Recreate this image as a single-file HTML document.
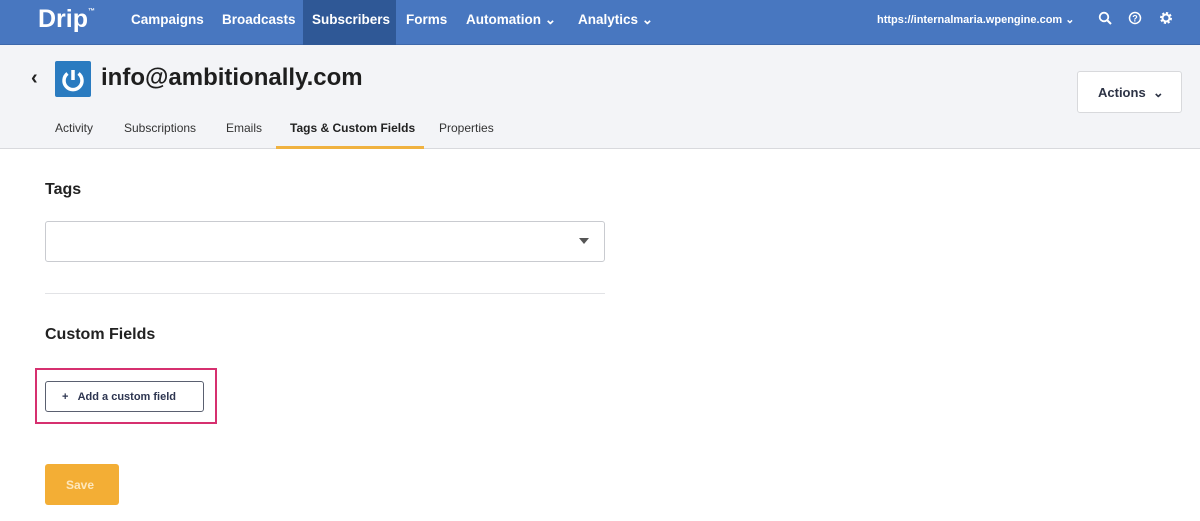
<!DOCTYPE html>
<html><head><style>
*{margin:0;padding:0;box-sizing:border-box}
body{width:1200px;height:521px;background:#fff;font-family:"Liberation Sans",sans-serif;position:relative;overflow:hidden}
.nav{position:absolute;left:0;top:0;width:1200px;height:45px;background:#4877c0;border-bottom:1px solid #3d68ab}
.nav span{position:absolute;top:12px;color:#fff;font-weight:bold;font-size:13.5px}
.sub{position:absolute;left:303px;top:0;width:93px;height:45px;background:#2f5896}
.hdr{position:absolute;left:0;top:45px;width:1200px;height:104px;background:#f3f4f7;border-bottom:1px solid #d8d9dd}
.t{position:absolute;font-size:12px;color:#333;top:121px}
</style></head><body>
<div class="nav">
<span style="left:38px;top:5px;font-size:25px;letter-spacing:0px">Drip<sup style="font-size:7px;vertical-align:top;position:relative;top:3px">™</sup></span>
<span style="left:131px">Campaigns</span>
<span style="left:222px">Broadcasts</span>
<div class="sub"></div>
<span style="left:312px">Subscribers</span>
<span style="left:406px">Forms</span>
<span style="left:466px">Automation ⌄</span>
<span style="left:578px">Analytics ⌄</span>
<span style="left:877px;font-size:11px;top:13px">https://internalmaria.wpengine.com ⌄</span>
<svg style="position:absolute;left:1098px;top:11px" width="14" height="14" viewBox="0 0 14 14"><circle cx="6" cy="6" r="4.3" fill="none" stroke="#fff" stroke-width="1.8"/><path d="M9 9l4 4" stroke="#fff" stroke-width="2"/></svg>
<svg style="position:absolute;left:1128px;top:11px" width="14" height="14" viewBox="0 0 14 14"><circle cx="7" cy="7" r="5.5" fill="none" stroke="#fff" stroke-width="1.5"/><text x="7" y="10.5" font-size="9" fill="#fff" text-anchor="middle" font-weight="bold" font-family="Liberation Sans">?</text></svg>
<svg style="position:absolute;left:1159px;top:11px" width="14" height="14" viewBox="0 0 14 14"><circle cx="7" cy="7" r="4.5" fill="none" stroke="#fff" stroke-width="3" stroke-dasharray="2 1.5"/><circle cx="7" cy="7" r="3.5" fill="none" stroke="#fff" stroke-width="2"/></svg>
</div>
<div class="hdr"></div>
<div style="position:absolute;left:31px;top:67px;font-size:20px;font-weight:bold;color:#222">‹</div>
<div style="position:absolute;left:55px;top:61px;width:36px;height:36px;background:#2a7bc0;border-radius:2px"></div>
<svg style="position:absolute;left:55px;top:61px" width="36" height="36" viewBox="0 0 36 36"><path d="M12.5 12.5a9 9 0 1 0 11 0" fill="none" stroke="#fff" stroke-width="3.5"/><path d="M18 9v10" stroke="#fff" stroke-width="3.5"/></svg>
<div style="position:absolute;left:101px;top:64px;font-size:24px;font-weight:bold;color:#1e1e1e">info@ambitionally.com</div>
<div style="position:absolute;left:1077px;top:71px;width:105px;height:42px;background:#fff;border:1px solid #d8d9dc;border-radius:3px;font-size:13px;font-weight:bold;color:#2d3345;padding:13px 0 0 20px">Actions &nbsp;⌄</div>
<div class="t" style="left:55px">Activity</div>
<div class="t" style="left:124px">Subscriptions</div>
<div class="t" style="left:226px">Emails</div>
<div class="t" style="left:290px;font-weight:bold;color:#222">Tags &amp; Custom Fields</div>
<div class="t" style="left:439px">Properties</div>
<div style="position:absolute;left:276px;top:146px;width:148px;height:3px;background:#f0b240"></div>
<div style="position:absolute;left:45px;top:181px;font-size:16px;font-weight:bold;color:#222">Tags</div>
<div style="position:absolute;left:45px;top:221px;width:560px;height:41px;border:1px solid #c9cbd0;border-radius:3px"></div>
<div style="position:absolute;left:579px;top:238px;border-left:5px solid transparent;border-right:5px solid transparent;border-top:6px solid #555"></div>
<div style="position:absolute;left:45px;top:293px;width:560px;height:1px;background:#e2e3e6"></div>
<div style="position:absolute;left:45px;top:326px;font-size:16px;font-weight:bold;color:#222">Custom Fields</div>
<div style="position:absolute;left:35px;top:368px;width:182px;height:56px;border:2px solid #d6306f"></div>
<div style="position:absolute;left:45px;top:381px;width:159px;height:31px;border:1px solid #5a6070;border-radius:3px;font-size:11px;font-weight:bold;color:#2d3550;padding:9px 0 0 16px">+ &nbsp;&nbsp;Add a custom field</div>
<div style="position:absolute;left:45px;top:464px;width:74px;height:41px;background:#f3ae35;border-radius:3px;font-size:12px;font-weight:bold;color:#fde7bd;padding:14px 0 0 21px">Save</div>
</body></html>
